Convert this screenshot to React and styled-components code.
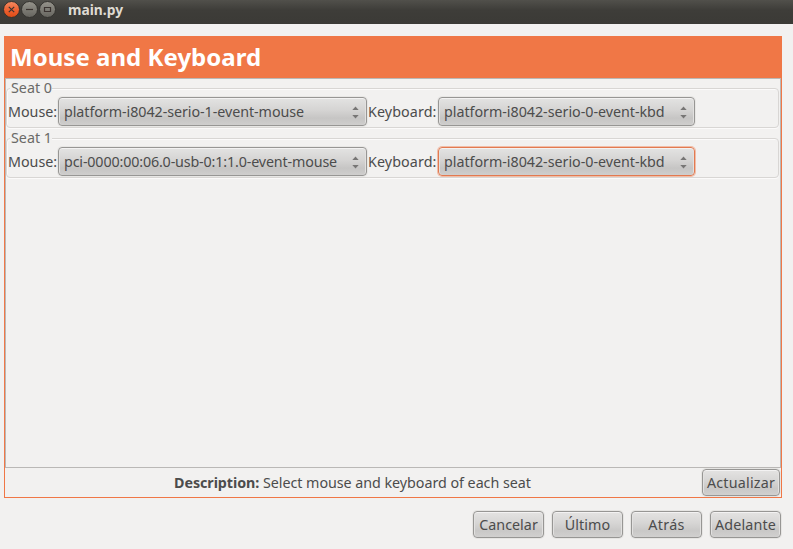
import React from 'react';
import styled, { createGlobalStyle } from 'styled-components';

const GlobalStyle = createGlobalStyle`
  * { box-sizing: border-box; }
  body {
    margin: 0;
    background: #f2f1f0;
    color: #4c4c4c;
    font: 14.3px/20px "Noto Sans", sans-serif;
    overflow: hidden;
  }
`;

const Window = styled.div`
  display: flex;
  flex-direction: column;
  width: 793px;
  height: 549px;
  background: #f2f1f0;
`;

const TitleBar = styled.header`
  display: flex;
  flex: 0 0 24px;
  align-items: flex-start;
  padding-left: 3px;
  background: linear-gradient(#51504b, #3e3d39 42%, #3b3a36);
`;

const Controls = styled.svg`
  display: block;
  width: 54px;
  height: 20px;
`;

const WindowTitle = styled.span`
  margin-left: 11px;
  font-size: 13.8px;
  font-weight: 700;
  line-height: 20px;
  color: #dfdbd2;
`;

const Content = styled.main`
  display: flex;
  flex-direction: column;
  padding: 12px 11px 0 4px;
`;

const Page = styled.section`
  display: flex;
  flex-direction: column;
  height: 462px;
  border: 1px solid #f07746;
  border-top: 0;
`;

const Heading = styled.h1`
  flex: 0 0 42px;
  margin: 0;
  padding-left: 5px;
  background: #f07746;
  color: #fff;
  font-size: 24px;
  line-height: 41px;
  font-weight: 700;
  letter-spacing: 0.03px;
  white-space: nowrap;
`;

const Panel = styled.div`
  flex: 0 0 390px;
  border: 1px solid #bab8b6;
`;

const Group = styled.section`
  height: 50px;
  padding: 9px 1px 0 0;
`;

const GroupBox = styled.div`
  height: 40px;
  border: 1px solid #d8d6d4;
  border-radius: 4px;
  box-shadow: inset 1px 1px #fbfafa, 0 1px #fbfafa;
`;

const Legend = styled.div`
  width: 42px;
  height: 18px;
  margin: -10px 0 0 3px;
  padding-left: 1px;
  background: #f2f1f0;
  color: #6a6967;
  line-height: 18px;
  white-space: nowrap;
`;

const Fields = styled.div`
  display: flex;
  align-items: center;
  height: 29px;
`;

const Label = styled.label`
  flex: 0 0 ${(p) => p.$width}px;
  padding-left: 1px;
  letter-spacing: ${(p) => p.$track || 0}px;
  white-space: nowrap;
`;

const Combo = styled.button`
  display: flex;
  align-items: center;
  justify-content: space-between;
  flex: 0 0 ${(p) => p.$width}px;
  height: 29px;
  padding: 0 7px 0 5px;
  border: 1px solid ${(p) => (p.$focused ? '#e27a51' : '#979694')};
  border-radius: 4px;
  background: linear-gradient(#e3e3e2, #d5d4d3 45%, #c6c5c4 75%, #cfcecd);
  box-shadow: inset 0 1px #f3f2f2, inset 1px 0 #e2e1e0, inset -1px 0 #e2e1e0,
    0 0 0 1px ${(p) => (p.$focused ? '#f1bda7' : '#e8e7e5')};
  color: #4c4c4c;
  font: inherit;
  letter-spacing: ${(p) => p.$track || 0}px;
  white-space: nowrap;
`;

const Arrows = styled.svg`
  display: block;
  width: 7px;
  height: 13px;
  margin-top: 2px;
  fill: #777675;
`;

const StatusRow = styled.footer`
  display: flex;
  align-items: center;
  flex: 1;
  padding-right: 1px;
`;

const Description = styled.div`
  flex: 1;
  padding-left: 169px;
  letter-spacing: -0.04px;
  white-space: nowrap;
`;

const Strong = styled.strong`
  letter-spacing: -0.06px;
`;

const Actions = styled.nav`
  display: flex;
  justify-content: flex-end;
  gap: 8px;
  padding: 13px 1px 0 0;
`;

const Button = styled.button`
  flex: 0 0 ${(p) => p.$width || 71}px;
  height: 27px;
  padding: 0;
  border: 1px solid #979694;
  border-radius: 4px;
  background: linear-gradient(#e4e3e2, #d6d5d4 45%, #c9c8c7 75%, #d1d0cf);
  box-shadow: inset 0 1px #f3f2f2, inset 1px 0 #e2e1e0, inset -1px 0 #e2e1e0,
    0 0 0 1px #e6e5e3;
  color: #4c4c4c;
  font: inherit;
  letter-spacing: ${(p) => p.$track}px;
  white-space: nowrap;
`;

const seats = [
  {
    name: 'Seat 0',
    mouse: 'platform-i8042-serio-1-event-mouse',
    mouseTrack: -0.06,
    keyboard: 'platform-i8042-serio-0-event-kbd',
  },
  {
    name: 'Seat 1',
    mouse: 'pci-0000:00:06.0-usb-0:1:1.0-event-mouse',
    mouseTrack: -0.15,
    keyboard: 'platform-i8042-serio-0-event-kbd',
    focused: true,
  },
];

const actions = [
  ['Cancelar', 0.03],
  ['Último', 0.1],
  ['Atrás', 0.3],
  ['Adelante', 0.15],
];

function Select({ value, ...props }) {
  return (
    <Combo {...props}>
      {value}
      <Arrows viewBox="0 0 7 13">
        <path d="M3.5 .5 6.7 4H.3zM3.5 12.5 6.7 9H.3z" />
      </Arrows>
    </Combo>
  );
}

function WindowControls() {
  return (
    <Controls viewBox="3 0 54 20">
      <defs>
        <linearGradient id="close" x2="0" y2="1">
          <stop stopColor="#f58b62" />
          <stop offset=".55" stopColor="#ed6030" />
          <stop offset="1" stopColor="#dc4b14" />
        </linearGradient>
        <linearGradient id="grey" x2="0" y2="1">
          <stop stopColor="#96948c" />
          <stop offset="1" stopColor="#65645e" />
        </linearGradient>
      </defs>
      <g stroke="#33322e">
        <circle cx="11.5" cy="9.5" r="8" fill="url(#close)" />
        <circle cx="29.5" cy="9.5" r="8" fill="url(#grey)" />
        <circle cx="47.5" cy="9.5" r="8" fill="url(#grey)" />
      </g>
      <g fill="none" stroke="#3b3330" strokeWidth="1.2">
        <path d="m8.8 6.8 5.4 5.4m0-5.4-5.4 5.4" />
        <path d="M26 9.5h7" />
        <path d="M44.5 7.5h6v4h-6z" />
      </g>
    </Controls>
  );
}

export default function App() {
  return (
    <Window>
      <GlobalStyle />
      <TitleBar>
        <WindowControls />
        <WindowTitle>main.py</WindowTitle>
      </TitleBar>
      <Content>
        <Page>
          <Heading>Mouse and Keyboard</Heading>
          <Panel>
            {seats.map((seat) => (
              <Group key={seat.name}>
                <GroupBox>
                  <Legend>{seat.name}</Legend>
                  <Fields>
                    <Label $width={51}>Mouse:</Label>
                    <Select $width={309} $track={seat.mouseTrack} value={seat.mouse} />
                    <Label $width={71} $track={0.1}>Keyboard:</Label>
                    <Select
                      $width={257}
                      $track={-0.03}
                      $focused={seat.focused}
                      value={seat.keyboard}
                    />
                  </Fields>
                </GroupBox>
              </Group>
            ))}
          </Panel>
          <StatusRow>
            <Description>
              <Strong>Description:</Strong> Select mouse and keyboard of each seat
            </Description>
            <Button $width={78} $track={0.22}>Actualizar</Button>
          </StatusRow>
        </Page>
        <Actions>
          {actions.map(([text, track]) => (
            <Button key={text} $track={track}>{text}</Button>
          ))}
        </Actions>
      </Content>
    </Window>
  );
}
